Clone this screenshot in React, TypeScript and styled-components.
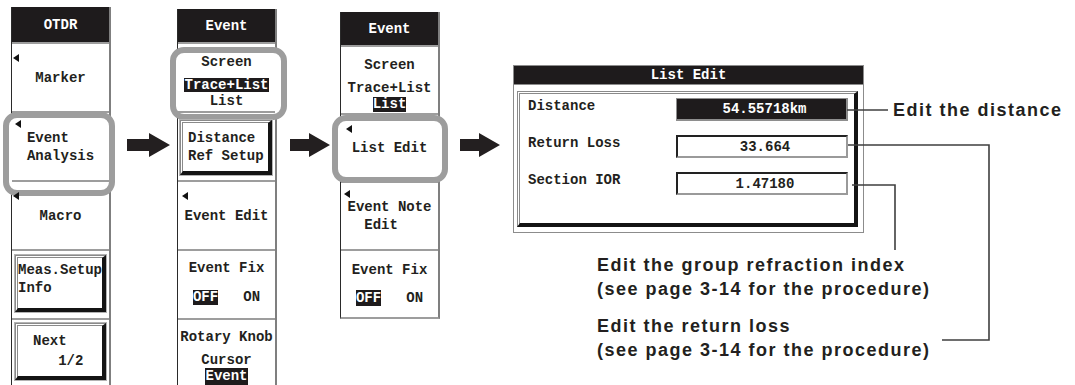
import React from "react";
import styled, { createGlobalStyle, css } from "styled-components";

const INK = "#231f20";
const MONO = `"Liberation Mono", "DejaVu Sans Mono", monospace`;
const SANS = `"Liberation Sans", Arial, sans-serif`;

const GlobalStyle = createGlobalStyle`
  html, body { margin: 0; padding: 0; background: #ffffff; overflow: hidden; }
  #root { width: 1075px; height: 385px; }
`;

const Page = styled.div`
  position: relative;
  width: 1075px;
  height: 385px;
  overflow: hidden;
  box-sizing: border-box;
  padding-left: 11px;
  display: flex;
  align-items: flex-start;
  font-family: ${MONO};
  color: ${INK};
  background: #fff;
`;

/* ---------- soft-key menu columns ---------- */

const MenuColumn = styled.div<{ $top: number }>`
  flex-shrink: 0;
  width: 100px;
  box-sizing: border-box;
  margin-top: ${(p) => p.$top}px;
  border-left: 1px solid #2a2a2a;
  border-right: 2px solid #7f7f7f;
  border-bottom: 2px solid #9d9d9d;
  display: flex;
  flex-direction: column;
  background: #fff;
`;

const MenuHeader = styled.div<{ $h: number }>`
  height: ${(p) => p.$h}px;
  background: #1e1b1c;
  color: #fff;
  font-size: 14px;
  font-weight: 700;
  display: flex;
  align-items: center;
  justify-content: center;
`;

const MenuSection = styled.div<{ $h?: number; $pt?: number }>`
  position: relative;
  box-sizing: border-box;
  height: ${(p) => p.$h ?? 69}px;
  border-top: 2px solid #9d9d9d;
  padding-top: ${(p) => p.$pt ?? 0}px;
  display: flex;
  flex-direction: column;
  align-items: center;
  justify-content: ${(p) => (p.$pt != null ? "flex-start" : "center")};
  font-size: 14px;
  font-weight: 700;
`;

const Line = styled.div<{ $lh?: number; $mt?: number }>`
  position: relative;
  z-index: 1;
  height: ${(p) => p.$lh ?? 16}px;
  line-height: ${(p) => p.$lh ?? 16}px;
  margin-top: ${(p) => p.$mt ?? 0}px;
  white-space: pre;
`;

const Inverse = styled.span`
  display: inline-block;
  height: 100%;
  background: #1e1b1c;
  color: #fff;
`;

const SubmenuMark = styled.span<{ $top?: number; $left?: number }>`
  position: absolute;
  z-index: 1;
  top: ${(p) => p.$top ?? 9}px;
  left: ${(p) => p.$left ?? 3}px;
  width: 0;
  height: 0;
  border-top: 4.5px solid transparent;
  border-bottom: 4.5px solid transparent;
  border-right: 6px solid #111;
`;

const RaisedKey = styled.div<{ $mt: number; $mb: number; $ml: number; $pl: number; $pt?: number; $lh: number }>`
  position: relative;
  z-index: 1;
  align-self: stretch;
  flex: 1;
  margin: ${(p) => `${p.$mt}px 3px ${p.$mb}px ${p.$ml}px`};
  border-top: 3px double #8a8a8a;
  border-left: 3px double #8a8a8a;
  border-right: 4px solid #141414;
  border-bottom: 4px solid #141414;
  box-shadow: 0 0 0 1px #b3b3b3;
  display: flex;
  flex-direction: column;
  justify-content: ${(p) => (p.$pt != null ? "flex-start" : "center")};
  padding-top: ${(p) => p.$pt ?? 0}px;
  padding-left: ${(p) => p.$pl}px;
  line-height: ${(p) => p.$lh}px;
  white-space: pre;
`;

const Highlight = styled.div<{ $x: number; $y: number; $w: number; $h: number }>`
  position: absolute;
  z-index: 0;
  left: ${(p) => p.$x}px;
  top: ${(p) => p.$y}px;
  width: ${(p) => p.$w}px;
  height: ${(p) => p.$h}px;
  box-sizing: border-box;
  border: 6px solid #9d9d9d;
  border-radius: 14px;
  background: #fff;
`;

/* ---------- flow arrows ---------- */

const FlowArrow = styled.svg<{ $ml: number; $mr: number }>`
  flex-shrink: 0;
  display: block;
  margin: 133px ${(p) => p.$mr}px 0 ${(p) => p.$ml}px;
`;

const Arrow = ({ w, ml, mr }: { w: number; ml: number; mr: number }) => (
  <FlowArrow $ml={ml} $mr={mr} width={w} height={24} viewBox={`0 0 ${w} 24`}>
    <polygon
      points={`0,6 ${w - 21},6 ${w - 21},0 ${w},12 ${w - 21},24 ${w - 21},18 0,18`}
      fill={INK}
    />
  </FlowArrow>
);

/* ---------- List Edit dialog and callouts ---------- */

const Callouts = styled.div`
  flex-shrink: 0;
  margin-top: 65px;
  display: flex;
  flex-direction: column;
`;

const DialogRow = styled.div`
  display: flex;
  align-items: flex-start;
`;

const Dialog = styled.div`
  width: 351px;
  box-sizing: border-box;
  border: 1px solid #8c8c8c;
  background: #fff;
`;

const DialogTitle = styled.div`
  height: 18px;
  line-height: 18px;
  background: #1e1b1c;
  color: #fff;
  text-align: center;
  font-size: 14px;
  font-weight: 700;
  border-bottom: 1px solid #8c8c8c;
`;

const DialogBody = styled.div`
  padding: 6px 5px 5px 3px;
`;

const InnerFrame = styled.div`
  height: 129px;
  border-top: 3px double #8a8a8a;
  border-left: 3px double #8a8a8a;
  border-right: 4px solid #141414;
  border-bottom: 4px solid #141414;
`;

const FieldGrid = styled.div`
  display: grid;
  grid-template-columns: 1fr 172px;
  grid-auto-rows: 23px;
  row-gap: 14px;
  padding: 4px 6px 0 8px;
  font-size: 14px;
  font-weight: 700;
`;

const FieldLabel = styled.div`
  align-self: start;
  line-height: 16px;
  white-space: pre;
`;

const ValueBox = styled.div<{ $active?: boolean }>`
  box-sizing: border-box;
  height: 23px;
  display: flex;
  align-items: center;
  justify-content: center;
  padding-left: 6px;
  ${(p) =>
    p.$active
      ? css`
          background: #1e1b1c;
          color: #fff;
          border: 1px solid #8e8e8e;
          border-right-width: 2px;
          border-bottom-width: 2px;
        `
      : css`
          background: #fff;
          color: ${INK};
          border-top: 2px solid #222;
          border-left: 2px solid #222;
          border-right: 2px solid #9a9a9a;
          border-bottom: 2px solid #9a9a9a;
        `}
`;

const NoteText = styled.div`
  font-family: ${SANS};
  font-weight: 700;
  font-size: 18px;
  letter-spacing: 1.5px;
  line-height: 24px;
  color: ${INK};
  white-space: pre;
`;

const DistanceNote = styled(NoteText)`
  margin: 33px 0 0 29px;
`;

const NoteStack = styled.div`
  margin: 20px 0 0 84px;
  display: flex;
  flex-direction: column;
  gap: 13px;
`;

const LeaderLayer = styled.svg`
  position: absolute;
  left: 0;
  top: 0;
  pointer-events: none;
`;

export default function App() {
  return (
    <>
      <GlobalStyle />
      <Page>
        {/* OTDR menu */}
        <MenuColumn $top={7}>
          <MenuHeader $h={35}>OTDR</MenuHeader>
          <MenuSection>
            <SubmenuMark $left={1} $top={10} />
            <Line>Marker</Line>
          </MenuSection>
          <MenuSection>
            <Highlight $x={-9} $y={-1} $w={112} $h={84} />
            <SubmenuMark $left={3} $top={7} />
            <Line $lh={18}>{"Event   "}</Line>
            <Line $lh={18}>Analysis</Line>
          </MenuSection>
          <MenuSection>
            <SubmenuMark $left={1} $top={10} />
            <Line>Macro</Line>
          </MenuSection>
          <MenuSection>
            <RaisedKey $mt={4} $mb={6} $ml={3} $pl={0} $pt={3} $lh={18}>
              {"Meas.Setup\nInfo"}
            </RaisedKey>
          </MenuSection>
          <MenuSection>
            <RaisedKey $mt={3} $mb={7} $ml={3} $pl={15} $lh={20}>
              {"Next\n   1/2"}
            </RaisedKey>
          </MenuSection>
        </MenuColumn>

        <Arrow w={43} ml={16} mr={7} />

        {/* Event menu (Screen highlighted) */}
        <MenuColumn $top={9}>
          <MenuHeader $h={33}>Event</MenuHeader>
          <MenuSection $pt={10}>
            <Highlight $x={-8} $y={3} $w={117} $h={73} />
            <Line>Screen</Line>
            <Line $lh={14} $mt={8}>
              <Inverse>Trace+List</Inverse>
            </Line>
            <Line $lh={15} $mt={2}>List</Line>
          </MenuSection>
          <MenuSection>
            <RaisedKey $mt={7} $mb={5} $ml={2} $pl={5} $lh={18}>
              {"Distance\nRef Setup"}
            </RaisedKey>
          </MenuSection>
          <MenuSection>
            <SubmenuMark $left={4} $top={10} />
            <Line>Event Edit</Line>
          </MenuSection>
          <MenuSection $pt={9}>
            <Line>Event Fix</Line>
            <Line $lh={15} $mt={14}>
              <Inverse>OFF</Inverse>
              {"   ON"}
            </Line>
          </MenuSection>
          <MenuSection $pt={9}>
            <Line>Rotary Knob</Line>
            <Line $lh={14} $mt={8}>Cursor</Line>
            <Line $lh={17} $mt={1}>
              <Inverse>Event</Inverse>
            </Line>
          </MenuSection>
        </MenuColumn>

        <Arrow w={40} ml={13} mr={10} />

        {/* Event menu (List selected) */}
        <MenuColumn $top={12}>
          <MenuHeader $h={33}>Event</MenuHeader>
          <MenuSection $h={68} $pt={10}>
            <Line>Screen</Line>
            <Line $lh={14} $mt={8}>Trace+List</Line>
            <Line $lh={15} $mt={2}>
              <Inverse>List</Inverse>
            </Line>
          </MenuSection>
          <MenuSection $h={68}>
            <Highlight $x={-9} $y={0} $w={116} $h={68} />
            <SubmenuMark $left={5} $top={10} />
            <Line>List Edit</Line>
          </MenuSection>
          <MenuSection $h={68}>
            <SubmenuMark $left={3} $top={7} />
            <Line $lh={18}>Event Note</Line>
            <Line $lh={18}>{"  Edit    "}</Line>
          </MenuSection>
          <MenuSection $h={68} $pt={11}>
            <Line>Event Fix</Line>
            <Line $lh={16} $mt={12}>
              <Inverse>OFF</Inverse>
              {"   ON"}
            </Line>
          </MenuSection>
        </MenuColumn>

        <Arrow w={40} ml={20} mr={13} />

        {/* List Edit dialog with callouts */}
        <Callouts>
          <DialogRow>
            <Dialog>
              <DialogTitle>List Edit</DialogTitle>
              <DialogBody>
                <InnerFrame>
                  <FieldGrid>
                    <FieldLabel>Distance</FieldLabel>
                    <ValueBox $active>54.55718km</ValueBox>
                    <FieldLabel>Return Loss</FieldLabel>
                    <ValueBox>33.664</ValueBox>
                    <FieldLabel>Section IOR</FieldLabel>
                    <ValueBox>1.47180</ValueBox>
                  </FieldGrid>
                </InnerFrame>
              </DialogBody>
            </Dialog>
            <DistanceNote>Edit the distance</DistanceNote>
          </DialogRow>
          <NoteStack>
            <NoteText>{"Edit the group refraction index\n(see page 3-14 for the procedure)"}</NoteText>
            <NoteText>{"Edit the return loss\n(see page 3-14 for the procedure)"}</NoteText>
          </NoteStack>
        </Callouts>

        <LeaderLayer width={1075} height={385} viewBox="0 0 1075 385">
          <g fill="none" stroke="#3f3f3f" strokeWidth={1.6}>
            <path d="M847 110 H888" />
            <path d="M848 145 H989 V340 H942" />
            <path d="M852 185 H895 V250" />
          </g>
        </LeaderLayer>
      </Page>
    </>
  );
}
